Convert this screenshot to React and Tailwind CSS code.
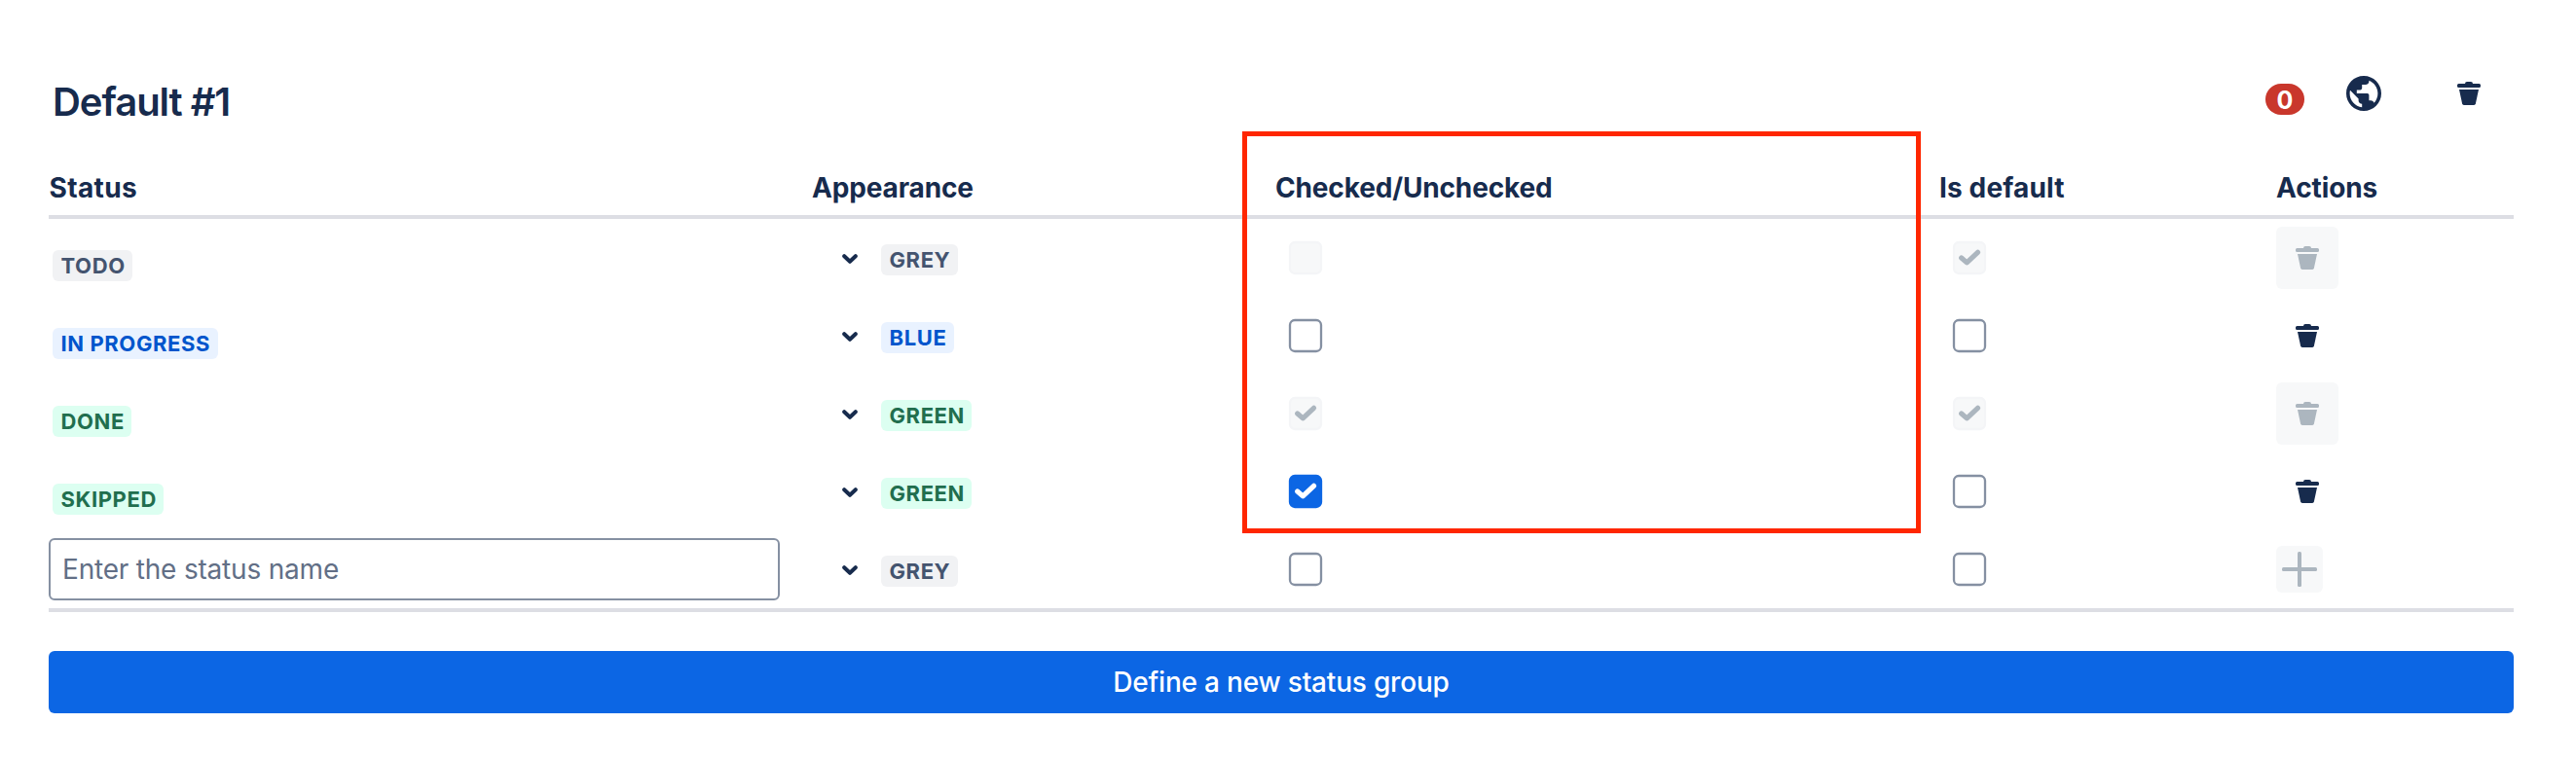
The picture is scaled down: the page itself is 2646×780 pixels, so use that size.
import React, { useState } from 'react';
import clsx from 'clsx';

const GRID = 'grid grid-cols-[784px_476px_682px_346px_244px]';

const LOZENGE_COLORS = {
  grey: 'bg-[#f1f2f4] text-[#44546f]',
  blue: 'bg-[#e9f2ff] text-[#0055cc]',
  green: 'bg-[#dcfff1] text-[#216e4e]',
};

const columns = [
  { title: 'Status', className: 'pl-[0.5px] tracking-[0.35px]' },
  { title: 'Appearance', className: 'tracking-[-0.15px]' },
  { title: 'Checked/Unchecked', className: 'tracking-[-0.15px]' },
  { title: 'Is default', className: 'tracking-[0.15px]' },
  { title: 'Actions', className: 'tracking-[-0.1px]' },
];

const statuses = [
  { name: 'TODO', appearance: 'grey', checked: false, isDefault: true, locked: true },
  { name: 'IN PROGRESS', appearance: 'blue', checked: false, isDefault: false, locked: false },
  { name: 'DONE', appearance: 'green', checked: true, isDefault: true, locked: true },
  { name: 'SKIPPED', appearance: 'green', checked: true, isDefault: false, locked: false },
];

function Lozenge({ appearance, className, children }) {
  return (
    <span
      className={clsx(
        'inline-flex h-8 items-center rounded-[6px] pr-[7.5px] pl-[8.5px] text-[22px] leading-8 font-bold tracking-[0.6px] whitespace-nowrap',
        LOZENGE_COLORS[appearance],
        className
      )}
    >
      {children}
    </span>
  );
}

function TrashIcon() {
  return (
    <svg width="24" height="24" viewBox="0 0 24 24" fill="currentColor">
      <path d="M8 2a2 2 0 0 1 2-2h4a2 2 0 0 1 2 2h6.500A1.500 1.500 0 0 1 24 3.500v1A1.500 1.500 0 0 1 22.500 6h-21A1.500 1.500 0 0 1 0 4.500v-1A1.500 1.500 0 0 1 1.500 2z" />
      <path d="M2 8h20l-3.100 14.600A1.800 1.800 0 0 1 17.200 24H6.800a1.800 1.800 0 0 1-1.700-1.400z" />
    </svg>
  );
}

function GlobeIcon() {
  return (
    <svg width="36" height="36" viewBox="2 2 20 20" fill="currentColor">
      <path d="M12 2C6.480 2 2 6.480 2 12s4.480 10 10 10 10-4.480 10-10S17.520 2 12 2zm-1 17.930c-3.950-.490-7-3.850-7-7.930 0-.620.080-1.210.210-1.790L9 15v1c0 1.100.900 2 2 2v1.930zm6.900-2.540c-.260-.810-1-1.390-1.900-1.390h-1v-3c0-.550-.450-1-1-1H8v-2h2c.550 0 1-.450 1-1V7h2c1.100 0 2-.900 2-2v-.410c2.930 1.190 5 4.060 5 7.410 0 2.080-.800 3.970-2.100 5.390z" />
    </svg>
  );
}

function PlusIcon() {
  return (
    <svg width="36" height="36" viewBox="0 0 36 36" fill="currentColor">
      <rect x="16" width="4" height="36" rx="1.500" />
      <rect y="16" width="36" height="4" rx="1.500" />
    </svg>
  );
}

function ChevronIcon() {
  return (
    <svg
      width="16"
      height="10"
      viewBox="0 0 16 10"
      className="mt-0.5"
      fill="none"
      stroke="currentColor"
      strokeWidth="4"
      strokeLinecap="round"
      strokeLinejoin="round"
    >
      <path d="M2.200 2.200 8 7.800l5.800-5.600" />
    </svg>
  );
}

function Checkbox({ checked, disabled, onChange }) {
  let box = 'fill-white stroke-[#8590a2]';
  if (disabled) box = 'fill-[#f7f8f9] stroke-[#f4f5f7]';
  else if (checked) box = 'fill-[#0c66e4] stroke-[#0c66e4]';

  return (
    <button
      type="button"
      role="checkbox"
      aria-checked={checked}
      disabled={disabled}
      onClick={onChange}
      className="ml-[13px] size-9"
    >
      <svg width="36" height="36" viewBox="0 0 36 36" fill="none">
        <rect x="2" y="2" width="32" height="32" rx="5" strokeWidth="2.300" className={box} />
        {checked && (
          <path
            d="M9.700 18l5.600 4.900L26.500 12.300"
            strokeWidth="5.200"
            strokeLinecap="round"
            strokeLinejoin="round"
            className={disabled ? 'stroke-[#acb6bf]' : 'stroke-white'}
          />
        )}
      </svg>
    </button>
  );
}

function AppearanceCell({ appearance }) {
  return (
    <div className="flex items-center gap-6 pl-[31px]">
      <ChevronIcon />
      <Lozenge appearance={appearance} className="mt-1">
        {appearance.toUpperCase()}
      </Lozenge>
    </div>
  );
}

function StatusRow({ status, onToggle }) {
  const { name, appearance, checked, isDefault, locked } = status;

  return (
    <div className={`${GRID} h-20 items-center`}>
      <div className="flex pt-4 pl-1">
        <Lozenge appearance={appearance}>{name}</Lozenge>
      </div>
      <AppearanceCell appearance={appearance} />
      <Checkbox checked={checked} disabled={locked} onChange={() => onToggle(name, 'checked')} />
      <Checkbox checked={isDefault} disabled={locked} onChange={() => onToggle(name, 'isDefault')} />
      <button
        type="button"
        disabled={locked}
        className={clsx(
          'flex size-16 items-center justify-center rounded-[6px]',
          locked && 'bg-[#f7f8f9] text-[#acb6bf]'
        )}
      >
        <TrashIcon />
      </button>
    </div>
  );
}

function App() {
  const [rows, setRows] = useState(statuses);
  const [draft, setDraft] = useState({ name: '', checked: false, isDefault: false });

  function toggle(name, field) {
    setRows(rows.map((row) => (row.name === name ? { ...row, [field]: !row[field] } : row)));
  }

  return (
    <div className="relative h-[780px] w-[2646px] overflow-hidden bg-white pt-16 pl-[50px] font-[Inter,sans-serif] text-[#172b4d]">
      <div className="w-[2532px]">
        <header className="flex h-16 items-center pr-[34px]">
          <h2 className="mt-[17px] mr-auto pl-1 text-[40px] leading-[48px] font-semibold tracking-[-1.05px]">
            Default #1
          </h2>
          <span className="mt-3 mr-[43px] flex h-8 w-10 items-center justify-center rounded-full bg-[#c9372c] pt-px text-[25px] leading-8 font-bold text-white">
            0
          </span>
          <button type="button" className="mr-[78px]">
            <GlobeIcon />
          </button>
          <button type="button">
            <TrashIcon />
          </button>
        </header>

        <div
          className={`${GRID} h-[97px] items-end border-b-4 border-[#dddee4] pb-[10px] text-[28px] leading-[35px] font-bold`}
        >
          {columns.map((column) => (
            <div key={column.title} className={column.className}>
              {column.title}
            </div>
          ))}
        </div>

        <div className="border-b-4 border-[#dddee4]">
          {rows.map((row) => (
            <StatusRow key={row.name} status={row} onToggle={toggle} />
          ))}
          <div className={`${GRID} h-20 items-center`}>
            <input
              type="text"
              placeholder="Enter the status name"
              value={draft.name}
              onChange={(e) => setDraft({ ...draft, name: e.target.value })}
              className="h-16 w-[751px] rounded-[6px] border-2 border-[#8590a2] px-3 text-[28px] tracking-[-0.2px] placeholder:text-[#626f86]"
            />
            <AppearanceCell appearance="grey" />
            <Checkbox
              checked={draft.checked}
              onChange={() => setDraft({ ...draft, checked: !draft.checked })}
            />
            <Checkbox
              checked={draft.isDefault}
              onChange={() => setDraft({ ...draft, isDefault: !draft.isDefault })}
            />
            <button
              type="button"
              disabled={!draft.name}
              className="flex size-12 items-center justify-center rounded-[6px] bg-[#f7f8f9] text-[#acb6bf]"
            >
              <PlusIcon />
            </button>
          </div>
        </div>

        <button
          type="button"
          className="mt-10 h-16 w-full rounded-[6px] bg-[#0c66e4] text-center text-[28px] leading-[64px] font-medium tracking-[-0.2px] text-white"
        >
          Define a new status group
        </button>
      </div>

      {/* highlight around the checked/unchecked column */}
      <div className="pointer-events-none absolute top-[135px] left-[1276px] h-[413px] w-[697px] border-[5px] border-[#ff2600]" />
    </div>
  );
}

export default App;
